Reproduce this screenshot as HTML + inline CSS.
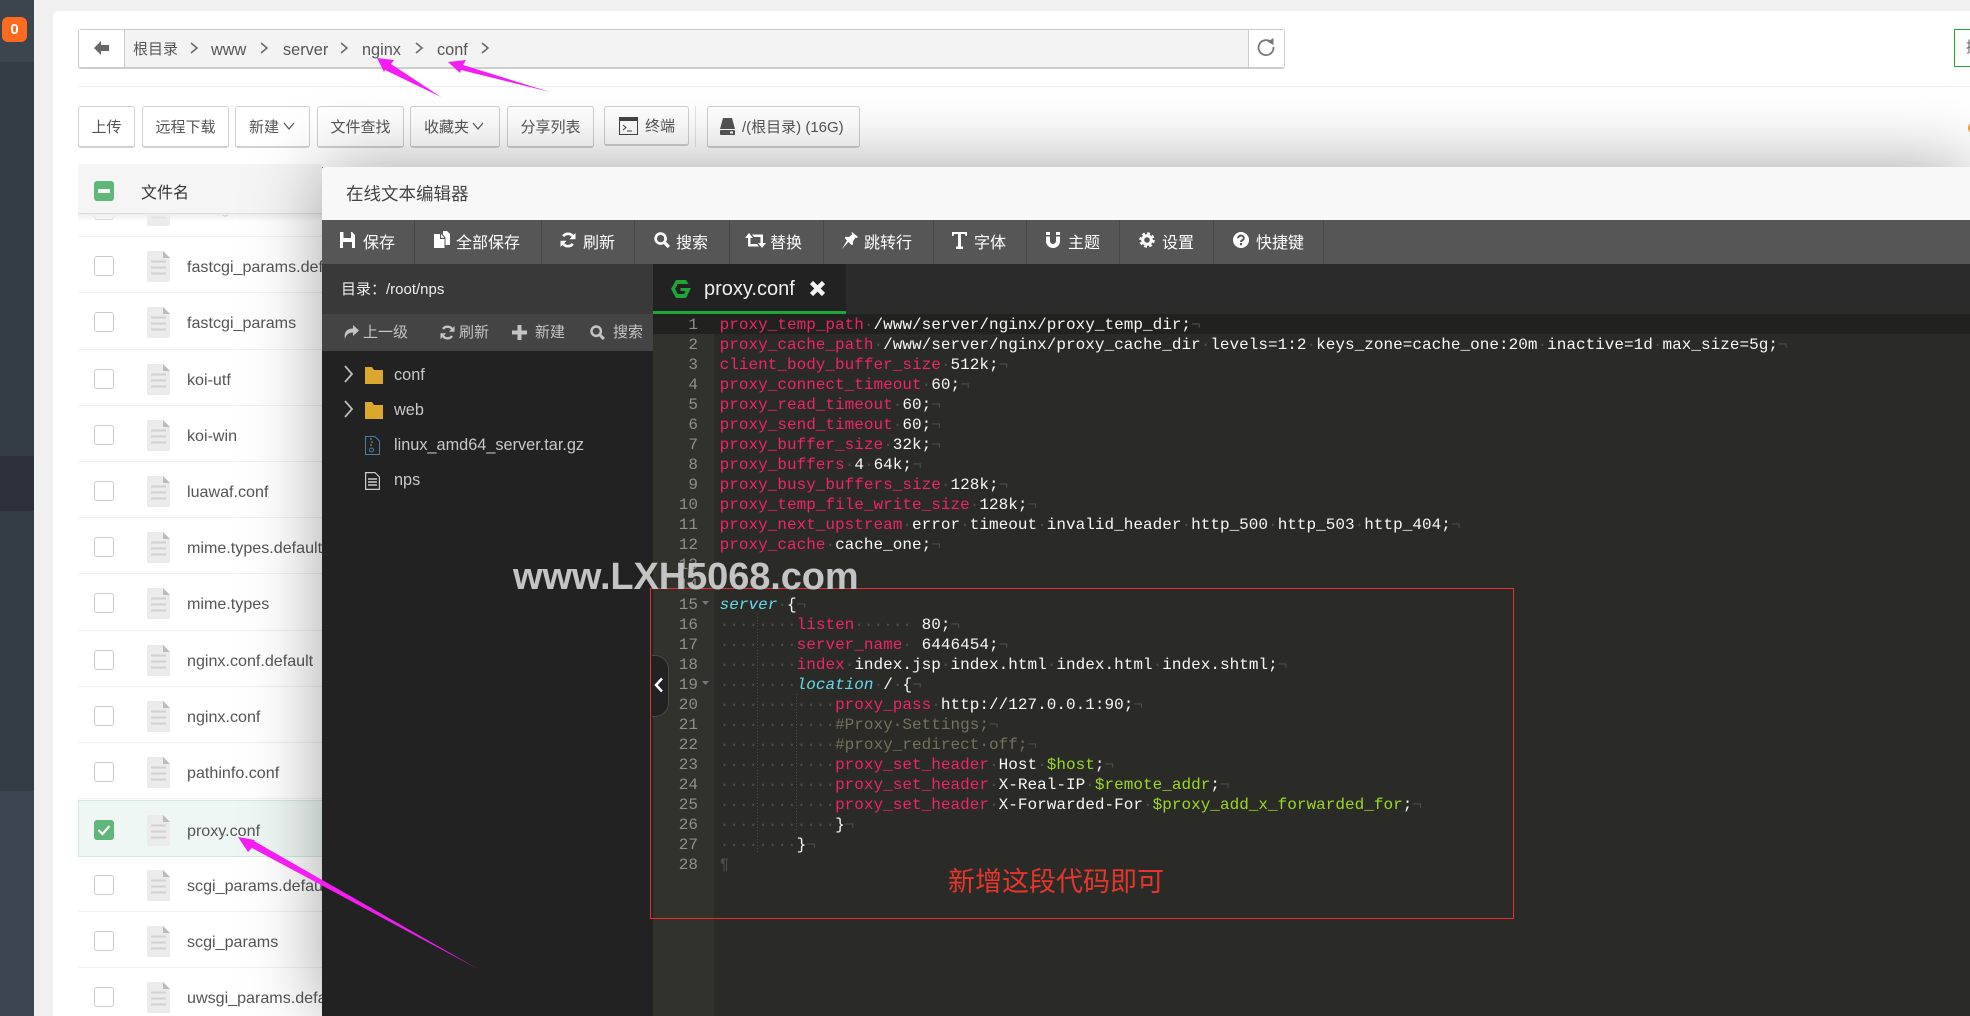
<!DOCTYPE html>
<html lang="zh"><head><meta charset="utf-8"><title>文件管理</title>
<style>
html,body{margin:0;padding:0;width:1970px;height:1016px;overflow:hidden;background:#f0f0f0}
body{font-family:"Liberation Sans","Noto Sans CJK SC",sans-serif;color:#555;position:relative}
.a{position:absolute}
.t{position:absolute;white-space:pre;line-height:20px}
.btn{position:absolute;top:106px;height:39px;border:1px solid #d0d0d0;border-bottom:2px solid #d0d0d0;border-radius:3px;background:#fff;box-sizing:content-box;font-size:15px;line-height:41px;text-align:center;color:#555;white-space:pre}
.row{position:absolute;left:78px;width:270px;height:56.2px;border-bottom:1px solid #f0f0f0;box-sizing:border-box}
.cb{position:absolute;left:16px;top:19px;width:18px;height:18px;border:1px solid #ccc;border-radius:3px;background:#fff}
.fi{position:absolute;left:69px;top:14px;width:23px;height:31px}
.nm{position:absolute;left:109px;top:20px;font-size:16.1px;line-height:20px;color:#555;white-space:pre}
.tb{position:absolute;top:234px;font-size:16px;line-height:20px;color:#fff;white-space:pre}
.v{position:absolute;top:220px;width:1px;height:44px;background:#474747}
.ic{position:absolute;fill:#fff}
.nv{position:absolute;top:323px;font-size:15px;line-height:20px;color:#c4c4c4;white-space:pre}
.tr{position:absolute;left:394px;font-size:16.3px;line-height:20px;color:#c8c8c8;white-space:pre}
.ln{position:absolute;left:653px;width:45px;margin-top:1px;text-align:right;font:16px/20px "Liberation Mono",monospace;color:#8f908a}
.cl{position:absolute;left:719.6px;margin-top:1px;font:16px/20px "Liberation Mono",monospace;color:#f8f8f2;white-space:pre;letter-spacing:.02px}
.k{color:#ee2566}.d{color:#4d4e45}.s{color:#66d9ef;font-style:italic}.g{color:#9bd827}.c{color:#75715e}
</style></head><body>

<svg width="0" height="0" style="position:absolute"><defs>
<symbol id="f" viewBox="0 0 23 31"><path d="M1 0H16L23 7V30a1 1 0 0 1-1 1H1a1 1 0 0 1-1-1V1a1 1 0 0 1 1-1z" fill="#ebebeb"/><path d="M16 0l7 7H16z" fill="#bbb"/><path d="M4 10.5h15M4 16.5h15M4 22.5h15" stroke="#d2d2d2" stroke-width="2"/></symbol>
<symbol id="rf" viewBox="0 0 16 16"><path d="M13.4 5.2A6 6 0 0 0 3.2 4.2M2.6 10.8a6 6 0 0 0 10.2 1" fill="none" stroke="currentColor" stroke-width="2.6"/><path d="M15.5 1v6.2H9.5zM.5 15V8.800h6z" fill="currentColor"/></symbol>
<symbol id="se" viewBox="0 0 16 16"><circle cx="6.600" cy="6.600" r="5" fill="none" stroke="currentColor" stroke-width="2.6"/><path d="M10 10l4.800 5" stroke="currentColor" stroke-width="3.200"/></symbol>
</defs></svg>

<!-- sidebar -->
<div class="a" style="left:0;top:0;width:34px;height:1016px;background:#343c44"></div>
<div class="a" style="left:0;top:0;width:34px;height:62px;background:#3c444e"></div>
<div class="a" style="left:0;top:456px;width:34px;height:55px;background:#2d323a"></div>
<div class="a" style="left:0;top:791px;width:34px;height:225px;background:#3d4650"></div>
<div class="a" style="left:2px;top:17px;width:25px;height:25px;border-radius:6px;background:#ff6a1f;color:#fff;font-size:15px;font-weight:bold;line-height:25px;text-align:center">0</div>

<!-- panel -->
<div class="a" style="left:53px;top:11px;width:1917px;height:1005px;background:#fff;border-radius:6px 0 0 0"></div>

<!-- breadcrumb -->
<div class="a" style="left:78px;top:29px;width:1205px;height:37px;border:1px solid #ccc;border-bottom:2px solid #ccc;border-radius:3px;background:#f3f3f3;box-sizing:content-box"></div>
<div class="a" style="left:79px;top:30px;width:45px;height:37px;background:#fff;border-right:1px solid #ccc"></div>
<div class="a" style="left:1248px;top:30px;width:35px;height:37px;background:#fff;border-left:1px solid #ccc"></div>
<svg class="a" style="left:94px;top:41px" width="16" height="14"><path d="M0 7L7 0V4H15V10H7V14z" fill="#666"/></svg>
<svg class="a" style="left:1257px;top:37px;color:#777" width="18" height="20" viewBox="0 0 18 20"><path d="M14.500 5.500A7.500 7.500 0 1 0 16.500 10" fill="none" stroke="#777" stroke-width="1.800"/><path d="M10.500 4.800L16.500 1v7z" fill="#777"/></svg>
<div class="t" style="left:133px;top:40px;font-size:15px">根目录</div>
<div class="t" style="left:211px;top:40px;font-size:16.3px">www</div>
<div class="t" style="left:283px;top:40px;font-size:16.3px">server</div>
<div class="t" style="left:362px;top:40px;font-size:16.3px">nginx</div>
<div class="t" style="left:437px;top:40px;font-size:16.3px">conf</div>
<svg class="a" style="left:0;top:-1px" width="500" height="70" fill="none" stroke="#666" stroke-width="1.500"><path d="M191 44l6 5-6 5M261 44l6 5-6 5M341 44l6 5-6 5M416 44l6 5-6 5M482 44l6 5-6 5"/></svg>

<!-- right green box -->
<div class="a" style="left:1954px;top:29px;width:20px;height:36px;border:1px solid #20a53a;background:#fff"></div>
<div class="t" style="left:1966px;top:38px;font-size:15px;color:#666">提</div>

<div class="a" style="left:78px;top:86px;width:1892px;height:1px;background:#eee"></div>

<!-- buttons -->
<div class="btn" style="left:78px;width:55px">上传</div>
<div class="btn" style="left:142px;width:85px">远程下载</div>
<div class="btn" style="left:235px;width:73px;text-align:left;text-indent:13px">新建</div>
<div class="btn" style="left:317px;width:85px">文件查找</div>
<div class="btn" style="left:410px;width:88px;text-align:left;text-indent:13px">收藏夹</div>
<div class="btn" style="left:507px;width:85px">分享列表</div>
<div class="btn" style="left:604px;width:83px;text-align:left;text-indent:40px;height:37px;line-height:39px">终端</div>
<div class="a" style="left:695px;top:106px;width:1px;height:41px;background:#e4e4e4"></div>
<div class="btn" style="left:707px;width:151px;text-align:left;text-indent:34px">/(根目录) (16G)</div>
<svg class="a" style="left:0;top:102px" width="760" height="50" fill="none" stroke="#555" stroke-width="1.200"><path d="M284 21l5 6 5-6M473 21l5 6 5-6"/></svg>
<svg class="a" style="left:619px;top:117px" width="19" height="18"><rect x=".5" y=".5" width="18" height="17" fill="#fff" stroke="#444"/><rect x="0" y="0" width="19" height="4" fill="#444"/><path d="M4 8l3 2.500-3 2.500M8 14h5" stroke="#444" fill="none"/></svg>
<svg class="a" style="left:720px;top:118px" width="15" height="17"><path d="M3 0H12L15 11H0z" fill="#555"/><rect y="12" width="15" height="5" rx="1" fill="#555"/><rect x="10" y="13.500" width="3" height="2" fill="#fff"/></svg>
<div class="a" style="left:1968px;top:122px;width:12px;height:12px;border-radius:50%;background:#e9a33c"></div>

<!-- file rows -->
<div class="row" style="top:181px"><div class="cb"></div><svg class="fi"><use href="#f"/></svg><div class="nm" style="top:17px">fastcgi.conf</div></div>
<div class="row" style="top:237.2px"><div class="cb"></div><svg class="fi"><use href="#f"/></svg><div class="nm">fastcgi_params.default</div></div>
<div class="row" style="top:293.4px"><div class="cb"></div><svg class="fi"><use href="#f"/></svg><div class="nm">fastcgi_params</div></div>
<div class="row" style="top:349.6px"><div class="cb"></div><svg class="fi"><use href="#f"/></svg><div class="nm">koi-utf</div></div>
<div class="row" style="top:405.8px"><div class="cb"></div><svg class="fi"><use href="#f"/></svg><div class="nm">koi-win</div></div>
<div class="row" style="top:462px"><div class="cb"></div><svg class="fi"><use href="#f"/></svg><div class="nm">luawaf.conf</div></div>
<div class="row" style="top:518.2px"><div class="cb"></div><svg class="fi"><use href="#f"/></svg><div class="nm">mime.types.default</div></div>
<div class="row" style="top:574.4px"><div class="cb"></div><svg class="fi"><use href="#f"/></svg><div class="nm">mime.types</div></div>
<div class="row" style="top:630.6px"><div class="cb"></div><svg class="fi"><use href="#f"/></svg><div class="nm">nginx.conf.default</div></div>
<div class="row" style="top:686.8px"><div class="cb"></div><svg class="fi"><use href="#f"/></svg><div class="nm">nginx.conf</div></div>
<div class="row" style="top:743px"><div class="cb"></div><svg class="fi"><use href="#f"/></svg><div class="nm">pathinfo.conf</div></div>
<div class="row" style="top:799.5px;height:57px;background:#eff7f5;border:1px solid #d5e8e2"><div class="cb" style="left:15px;background:#5fb878;border-color:#5fb878"><svg width="18" height="18" style="display:block"><path d="M3.500 9l4 4 7-8" fill="none" stroke="#fff" stroke-width="2.200"/></svg></div><svg class="fi" style="left:68px"><use href="#f"/></svg><div class="nm" style="left:108px">proxy.conf</div></div>
<div class="row" style="top:856px"><div class="cb"></div><svg class="fi"><use href="#f"/></svg><div class="nm">scgi_params.default</div></div>
<div class="row" style="top:912px"><div class="cb"></div><svg class="fi"><use href="#f"/></svg><div class="nm">scgi_params</div></div>
<div class="row" style="top:968px"><div class="cb"></div><svg class="fi"><use href="#f"/></svg><div class="nm">uwsgi_params.default</div></div>

<!-- table head -->
<div class="a" style="left:78px;top:164px;width:244px;height:50px;background:#f5f5f5;border-bottom:1px solid #ddd;box-sizing:border-box"></div>
<div class="a" style="left:78px;top:214px;width:244px;height:8px;background:linear-gradient(#eee,rgba(255,255,255,0))"></div>
<div class="a" style="left:94px;top:181px;width:20px;height:20px;border-radius:3px;background:#5fb878"><div class="a" style="left:4px;top:8px;width:12px;height:4px;background:#fff;border-radius:1px"></div></div>
<div class="t" style="left:141px;top:184px;font-size:16px;color:#333">文件名</div>

<!-- editor -->
<div class="a" style="left:322px;top:167px;width:1648px;height:849px;background:#222;box-shadow:1px 1px 70px rgba(0,0,0,.37)"></div>
<div class="a" style="left:322px;top:167px;width:1648px;height:53px;background:#f8f8f8;border-radius:2px 0 0 0"></div>
<div class="t" style="left:346px;top:184px;font-size:17.500px;color:#444">在线文本编辑器</div>
<div class="a" style="left:322px;top:220px;width:1648px;height:44px;background:#565656"></div>
<div class="v" style="left:414px"></div><div class="v" style="left:541px"></div><div class="v" style="left:634px"></div><div class="v" style="left:729px"></div><div class="v" style="left:823px"></div><div class="v" style="left:933px"></div><div class="v" style="left:1026px"></div><div class="v" style="left:1119px"></div><div class="v" style="left:1213px"></div><div class="v" style="left:1323px"></div>

<svg class="ic" style="left:340px;top:232px" width="15" height="16" viewBox="0 0 15 16"><path fill-rule="evenodd" d="M0 0H12L15 3V16H0zM3.500 0V6H11V0zM3 10V16H12V10z"/></svg>
<div class="tb" style="left:363px">保存</div>
<svg class="ic" style="left:434px;top:231px" width="16" height="17" viewBox="0 0 16 17"><path d="M0 3H6V8H10.500V17H0zM7 3l3.500 3.800H7zM9 0H13L16 3V14H11.500V6.500L9 3.500z"/></svg>
<div class="tb" style="left:456px">全部保存</div>
<svg style="position:absolute;left:560px;top:232px;color:#fff" width="16" height="16"><use href="#rf"/></svg>
<div class="tb" style="left:583px">刷新</div>
<svg style="position:absolute;left:654px;top:232px;color:#fff" width="16" height="16"><use href="#se"/></svg>
<div class="tb" style="left:676px">搜索</div>
<svg class="ic" style="left:745px;top:233px" width="21" height="15" viewBox="0 0 21 15"><path d="M0 5L4 0 8 5H5.500V11H12L14 13.500H3V5zM21 10L17 15 13 10H15.500V4H9L7 1.500H18V10z"/></svg>
<div class="tb" style="left:770px">替换</div>
<svg class="ic" style="left:842px;top:232px" width="16" height="17" viewBox="0 0 16 17"><path d="M10 0L16 5 14.500 6 13.500 5.500 11 9.500 11 12.500 9.500 13 6.500 10 0 17 5 8.500 2.700 6 3.500 4.800 7 5 10.500 2 9.500 1z"/></svg>
<div class="tb" style="left:864px">跳转行</div>
<svg class="ic" style="left:952px;top:232px" width="15" height="17" viewBox="0 0 15 17"><path d="M0 0H15V4H13.500L13 2H9V14.500H11V17H4V14.500H6V2H2L1.500 4H0z"/></svg>
<div class="tb" style="left:974px">字体</div>
<svg class="ic" style="left:1046px;top:232px" width="14" height="16" viewBox="0 0 14 16"><path d="M0 0H4V3H0zM10 0H14V3H10zM0 4.500H4V9a3 3 0 0 0 6 0V4.500H14V9A7 7 0 0 1 0 9z"/></svg>
<div class="tb" style="left:1068px">主题</div>
<svg class="ic" style="left:1139px;top:232px" width="16" height="16" viewBox="0 0 16 16"><circle cx="8" cy="8" r="4.300" fill="none" stroke="#fff" stroke-width="3"/><circle cx="8" cy="8" r="6.500" fill="none" stroke="#fff" stroke-width="2.500" stroke-dasharray="2.800 2.300"/></svg>
<div class="tb" style="left:1162px">设置</div>
<svg class="ic" style="left:1233px;top:232px" width="16" height="16" viewBox="0 0 16 16"><circle cx="8" cy="8" r="8"/><path d="M5.200 6.300A2.800 2.500 0 1 1 9.200 8.300C8.300 8.800 8 9.200 8 10" fill="none" stroke="#565656" stroke-width="2"/><rect x="6.900" y="11" width="2.200" height="2.200" fill="#565656"/></svg>
<div class="tb" style="left:1256px">快捷键</div>

<!-- editor sidebar -->
<div class="a" style="left:322px;top:264px;width:331px;height:50px;background:#393939"></div>
<div class="t" style="left:341px;top:280px;font-size:15px;color:#eee">目录：/root/nps</div>
<div class="a" style="left:322px;top:314px;width:331px;height:37px;background:#444"></div>
<svg class="a" style="left:344px;top:325px" width="15" height="15" viewBox="0 0 15 15"><path d="M9 0L15 5.500 9 11V7.500C5 7.500 2 9.500 1 14 -.5 7.500 3 3.500 9 3.500z" fill="#c4c4c4"/></svg>
<div class="nv" style="left:363px">上一级</div>
<svg style="position:absolute;left:440px;top:325px;color:#c4c4c4" width="15" height="15"><use href="#rf"/></svg>
<div class="nv" style="left:459px">刷新</div>
<svg class="a" style="left:512px;top:325px" width="15" height="15"><path d="M5.500 0h4v5.500H15v4H9.500V15h-4V9.500H0v-4h5.500z" fill="#c4c4c4"/></svg>
<div class="nv" style="left:535px">新建</div>
<svg style="position:absolute;left:590px;top:325px;color:#c4c4c4" width="15" height="15"><use href="#se"/></svg>
<div class="nv" style="left:613px">搜索</div>

<svg class="a" style="left:343px;top:365px" width="12" height="60" fill="none" stroke="#bbb" stroke-width="1.800"><path d="M2 1l7 8-7 8M2 36l7 8-7 8"/></svg>
<svg class="a" style="left:365px;top:366px" width="18" height="60"><path d="M0 1H7L9 4H18V18H0zM0 36H7L9 39H18V53H0z" fill="#dba72c"/></svg>
<svg class="a" style="left:365px;top:436px" width="15" height="19" fill="none" stroke="#4a7fa8"><path d="M.5.500H10L14.500 5V18.500H.5z"/><path d="M5 3h2M6 6h2M5 9h2" stroke="#7aa"/><circle cx="6.500" cy="14" r="2"/></svg>
<svg class="a" style="left:365px;top:472px" width="15" height="18" fill="none" stroke="#ccc" stroke-width="1.200"><path d="M.6.600H10L14.400 5V17.400H.6z"/><path d="M3 7h9M3 10h9M3 13h9" stroke-width="1.500"/></svg>
<div class="tr" style="top:365px">conf</div>
<div class="tr" style="top:400px">web</div>
<div class="tr" style="top:435px">linux_amd64_server.tar.gz</div>
<div class="tr" style="top:470px">nps</div>

<!-- tabs -->
<div class="a" style="left:653px;top:264px;width:1317px;height:50px;background:#2b2b2b"></div>
<div class="a" style="left:653px;top:264px;width:193px;height:47px;background:#222"></div>
<div class="a" style="left:653px;top:311px;width:193px;height:3px;background:#20a53a"></div>
<svg class="a" style="left:671px;top:280px" width="20" height="18" viewBox="0 0 20 18"><path d="M5 0H15L17.500 4H6.800L4 9 6.800 14H13L14.500 11H9.500V8H20L15 18H5L0 9z" fill="#20a53a"/></svg>
<div class="t" style="left:704px;top:279px;font-size:20px;color:#eee">proxy.conf</div>
<svg class="a" style="left:809px;top:280px" width="17" height="17"><path d="M2.500 2.500l12 12M14.500 2.500l-12 12" stroke="#f2f2f2" stroke-width="4.500"/></svg>

<!-- code -->
<div class="a" style="left:653px;top:314px;width:1317px;height:702px;background:#2a2b26"></div>
<div class="a" style="left:653px;top:314px;width:61px;height:702px;background:#30322b"></div>
<div class="a" style="left:653px;top:314px;width:1317px;height:20px;background:#212120"></div>

<div class="ln" style="top:314px">1</div><div class="ln" style="top:334px">2</div><div class="ln" style="top:354px">3</div><div class="ln" style="top:374px">4</div><div class="ln" style="top:394px">5</div><div class="ln" style="top:414px">6</div><div class="ln" style="top:434px">7</div><div class="ln" style="top:454px">8</div><div class="ln" style="top:474px">9</div><div class="ln" style="top:494px">10</div><div class="ln" style="top:514px">11</div><div class="ln" style="top:534px">12</div><div class="ln" style="top:554px">13</div><div class="ln" style="top:574px">14</div><div class="ln" style="top:594px">15</div><div class="ln" style="top:614px">16</div><div class="ln" style="top:634px">17</div><div class="ln" style="top:654px">18</div><div class="ln" style="top:674px">19</div><div class="ln" style="top:694px">20</div><div class="ln" style="top:714px">21</div><div class="ln" style="top:734px">22</div><div class="ln" style="top:754px">23</div><div class="ln" style="top:774px">24</div><div class="ln" style="top:794px">25</div><div class="ln" style="top:814px">26</div><div class="ln" style="top:834px">27</div><div class="ln" style="top:854px">28</div>
<svg class="a" style="left:702px;top:601px" width="8" height="90" fill="#777"><path d="M0 0h7l-3.500 4zM0 80h7l-3.500 4z"/></svg>
<svg class="a" style="left:750px;top:614px" width="50" height="240" fill="none" stroke="#4b4c43" stroke-dasharray="1 2"><path d="M7.500 0V240M46.500 80V220"/></svg>

<div class="cl" style="top:314px"><span class="k">proxy_temp_path</span><span class="d">·</span>/www/server/nginx/proxy_temp_dir;<span class="d">¬</span></div>
<div class="cl" style="top:334px"><span class="k">proxy_cache_path</span><span class="d">·</span>/www/server/nginx/proxy_cache_dir<span class="d">·</span>levels=1:2<span class="d">·</span>keys_zone=cache_one:20m<span class="d">·</span>inactive=1d<span class="d">·</span>max_size=5g;<span class="d">¬</span></div>
<div class="cl" style="top:354px"><span class="k">client_body_buffer_size</span><span class="d">·</span>512k;<span class="d">¬</span></div>
<div class="cl" style="top:374px"><span class="k">proxy_connect_timeout</span><span class="d">·</span>60;<span class="d">¬</span></div>
<div class="cl" style="top:394px"><span class="k">proxy_read_timeout</span><span class="d">·</span>60;<span class="d">¬</span></div>
<div class="cl" style="top:414px"><span class="k">proxy_send_timeout</span><span class="d">·</span>60;<span class="d">¬</span></div>
<div class="cl" style="top:434px"><span class="k">proxy_buffer_size</span><span class="d">·</span>32k;<span class="d">¬</span></div>
<div class="cl" style="top:454px"><span class="k">proxy_buffers</span><span class="d">·</span>4<span class="d">·</span>64k;<span class="d">¬</span></div>
<div class="cl" style="top:474px"><span class="k">proxy_busy_buffers_size</span><span class="d">·</span>128k;<span class="d">¬</span></div>
<div class="cl" style="top:494px"><span class="k">proxy_temp_file_write_size</span><span class="d">·</span>128k;<span class="d">¬</span></div>
<div class="cl" style="top:514px"><span class="k">proxy_next_upstream</span><span class="d">·</span>error<span class="d">·</span>timeout<span class="d">·</span>invalid_header<span class="d">·</span>http_500<span class="d">·</span>http_503<span class="d">·</span>http_404;<span class="d">¬</span></div>
<div class="cl" style="top:534px"><span class="k">proxy_cache</span><span class="d">·</span>cache_one;<span class="d">¬</span></div>
<div class="cl" style="top:594px"><span class="s">server</span><span class="d">·</span>{<span class="d">¬</span></div>
<div class="cl" style="top:614px"><span class="d">········</span><span class="k">listen</span><span class="d">······ </span>80;<span class="d">¬</span></div>
<div class="cl" style="top:634px"><span class="d">········</span><span class="k">server_name</span><span class="d">· </span>6446454;<span class="d">¬</span></div>
<div class="cl" style="top:654px"><span class="d">········</span><span class="k">index</span><span class="d">·</span>index.jsp<span class="d">·</span>index.html<span class="d">·</span>index.html<span class="d">·</span>index.shtml;<span class="d">¬</span></div>
<div class="cl" style="top:674px"><span class="d">········</span><span class="s">location</span><span class="d">·</span>/<span class="d">·</span>{<span class="d">¬</span></div>
<div class="cl" style="top:694px"><span class="d">············</span><span class="k">proxy_pass</span><span class="d">·</span>http://127.0.0.1:90;<span class="d">¬</span></div>
<div class="cl" style="top:714px"><span class="d">············</span><span class="c">#Proxy·Settings;</span><span class="d">¬</span></div>
<div class="cl" style="top:734px"><span class="d">············</span><span class="c">#proxy_redirect·off;</span><span class="d">¬</span></div>
<div class="cl" style="top:754px"><span class="d">············</span><span class="k">proxy_set_header</span><span class="d">·</span>Host<span class="d">·</span><span class="g">$host</span>;<span class="d">¬</span></div>
<div class="cl" style="top:774px"><span class="d">············</span><span class="k">proxy_set_header</span><span class="d">·</span>X-Real-IP<span class="d">·</span><span class="g">$remote_addr</span>;<span class="d">¬</span></div>
<div class="cl" style="top:794px"><span class="d">············</span><span class="k">proxy_set_header</span><span class="d">·</span>X-Forwarded-For<span class="d">·</span><span class="g">$proxy_add_x_forwarded_for</span>;<span class="d">¬</span></div>
<div class="cl" style="top:814px"><span class="d">············</span>}<span class="d">¬</span></div>
<div class="cl" style="top:834px"><span class="d">········</span>}<span class="d">¬</span></div>
<div class="cl" style="top:854px"><span class="d">¶</span></div>

<!-- collapse handle -->
<div class="a" style="left:652px;top:655px;width:17px;height:62px;background:#222;border:1px solid #4a4a4a;border-left:0;border-radius:0 14px 14px 0;box-sizing:border-box"></div>
<svg class="a" style="left:653px;top:677px" width="11" height="16" fill="none" stroke="#fff" stroke-width="2.500"><path d="M9 1.500L3 8l6 6.500"/></svg>

<!-- annotations -->
<div class="a" style="left:650px;top:588px;width:864px;height:331px;border:1px solid #e5312f;box-sizing:border-box"></div>
<div class="t" style="left:948px;top:867px;font-size:27px;line-height:30px;color:#e5352d">新增这段代码即可</div>
<div class="t" style="left:513px;top:555px;font-size:38px;line-height:44px;font-weight:bold;color:#c4c4c4;letter-spacing:-.1px">www.LXH5068.com</div>

<svg class="a" style="left:0;top:0" width="1970" height="1016">
<path d="M377 58L394 60 391 64 441 97 385 70 384 72z" fill="#f41ef4"/>
<path d="M448 62L466 60 463 65 550 92 461 70 460 73z" fill="#f41ef4"/>
<path d="M238 837L255 840 254 841 478 969 252 848 248 852z" fill="#f41ef4"/>
</svg>
</body></html>
